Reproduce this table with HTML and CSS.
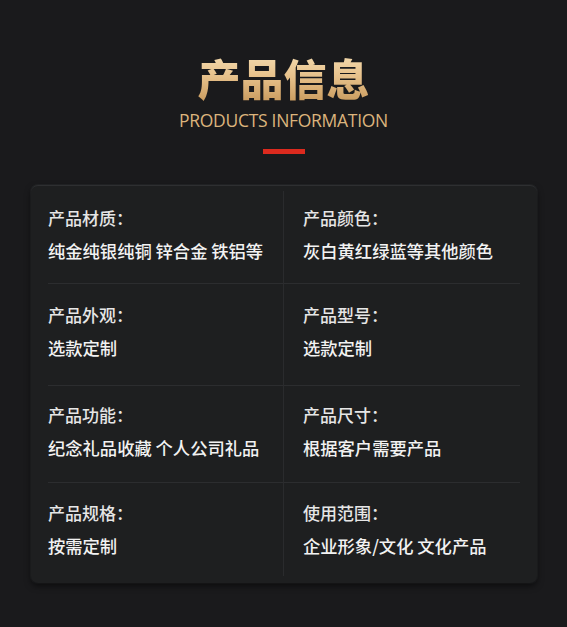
FILE: index.html
```html
<!DOCTYPE html>
<html lang="zh">
<head>
<meta charset="utf-8">
<link rel="stylesheet" href="styles.css">
</head>
<body>
<div class="page">
  <header class="head">
    <h1 class="title">产品信息</h1>
    <div class="sub">PRODUCTS INFORMATION</div>
    <div class="bar"></div>
  </header>
  <section class="card">
    <div class="cell"><div class="label">产品材质：</div><div class="value">纯金纯银纯铜 锌合金 铁铝等</div></div>
    <div class="cell right"><div class="label">产品颜色：</div><div class="value">灰白黄红绿蓝等其他颜色</div></div>
    <div class="cell top"><div class="label">产品外观：</div><div class="value">选款定制</div></div>
    <div class="cell right top"><div class="label">产品型号：</div><div class="value">选款定制</div></div>
    <div class="cell top"><div class="label">产品功能：</div><div class="value">纪念礼品收藏 个人公司礼品</div></div>
    <div class="cell right top"><div class="label">产品尺寸：</div><div class="value">根据客户需要产品</div></div>
    <div class="cell top last"><div class="label">产品规格：</div><div class="value">按需定制</div></div>
    <div class="cell right top last"><div class="label">使用范围：</div><div class="value">企业形象/文化 文化产品</div></div>
  </section>
</div>
</body>
</html>
```
FILE: styles.css
```css
html, body {
  margin: 0;
  padding: 0;
  background: #1a1a1c;
}
.page {
  width: 567px;
  height: 627px;
  background: #1a1a1c;
  font-family: "Noto Sans CJK SC", "Noto Sans", sans-serif;
  padding-top: 51px;
  box-sizing: border-box;
}
.head {
  display: flex;
  flex-direction: column;
  align-items: center;
}
.title {
  margin: 0;
  font-size: 43px;
  line-height: 52px;
  font-weight: 900;
  background: linear-gradient(180deg, #f6dfb4 0%, #e6c08a 50%, #c8995c 100%);
  -webkit-background-clip: text;
  background-clip: text;
  color: transparent;
}
.sub {
  margin-top: 5px;
  font-family: "Open Sans", "Noto Sans", sans-serif;
  font-size: 17.5px;
  line-height: 24px;
  font-weight: 400;
  color: #dcb47c;
  letter-spacing: -0.3px;
}
.bar {
  margin-top: 17px;
  width: 42px;
  height: 5px;
  background: #dc2a1e;
}
.card {
  margin: 31px 30px 0 31px;
  height: 398px;
  box-sizing: border-box;
  padding: 5px 17px 8px 17px;
  background: #1e1f20;
  border-radius: 7px;
  border-top: 1px solid #2e2f31;
  box-shadow: 0 3px 6px rgba(0,0,0,0.55), 0 0 0 1px #232426;
  display: grid;
  grid-template-columns: 235px 1fr;
  grid-template-rows: 92px 102px 97px 94px;
}
.cell {
  display: flex;
  flex-direction: column;
  justify-content: center;
  padding-bottom: 6px;
  box-sizing: border-box;
}
.cell.last {
  padding-bottom: 0;
}
.cell.right {
  border-left: 1px solid #2a2b2d;
  padding-left: 19px;
}
.cell.top {
  border-top: 1px solid #2c2d2f;
}
.label {
  font-size: 17px;
  line-height: 24px;
  color: #e6e6e6;
  font-weight: 500;
}
.value {
  margin-top: 9px;
  font-size: 17.3px;
  line-height: 24px;
  color: #f2f2f2;
  font-weight: 500;
  white-space: nowrap;
}
```
